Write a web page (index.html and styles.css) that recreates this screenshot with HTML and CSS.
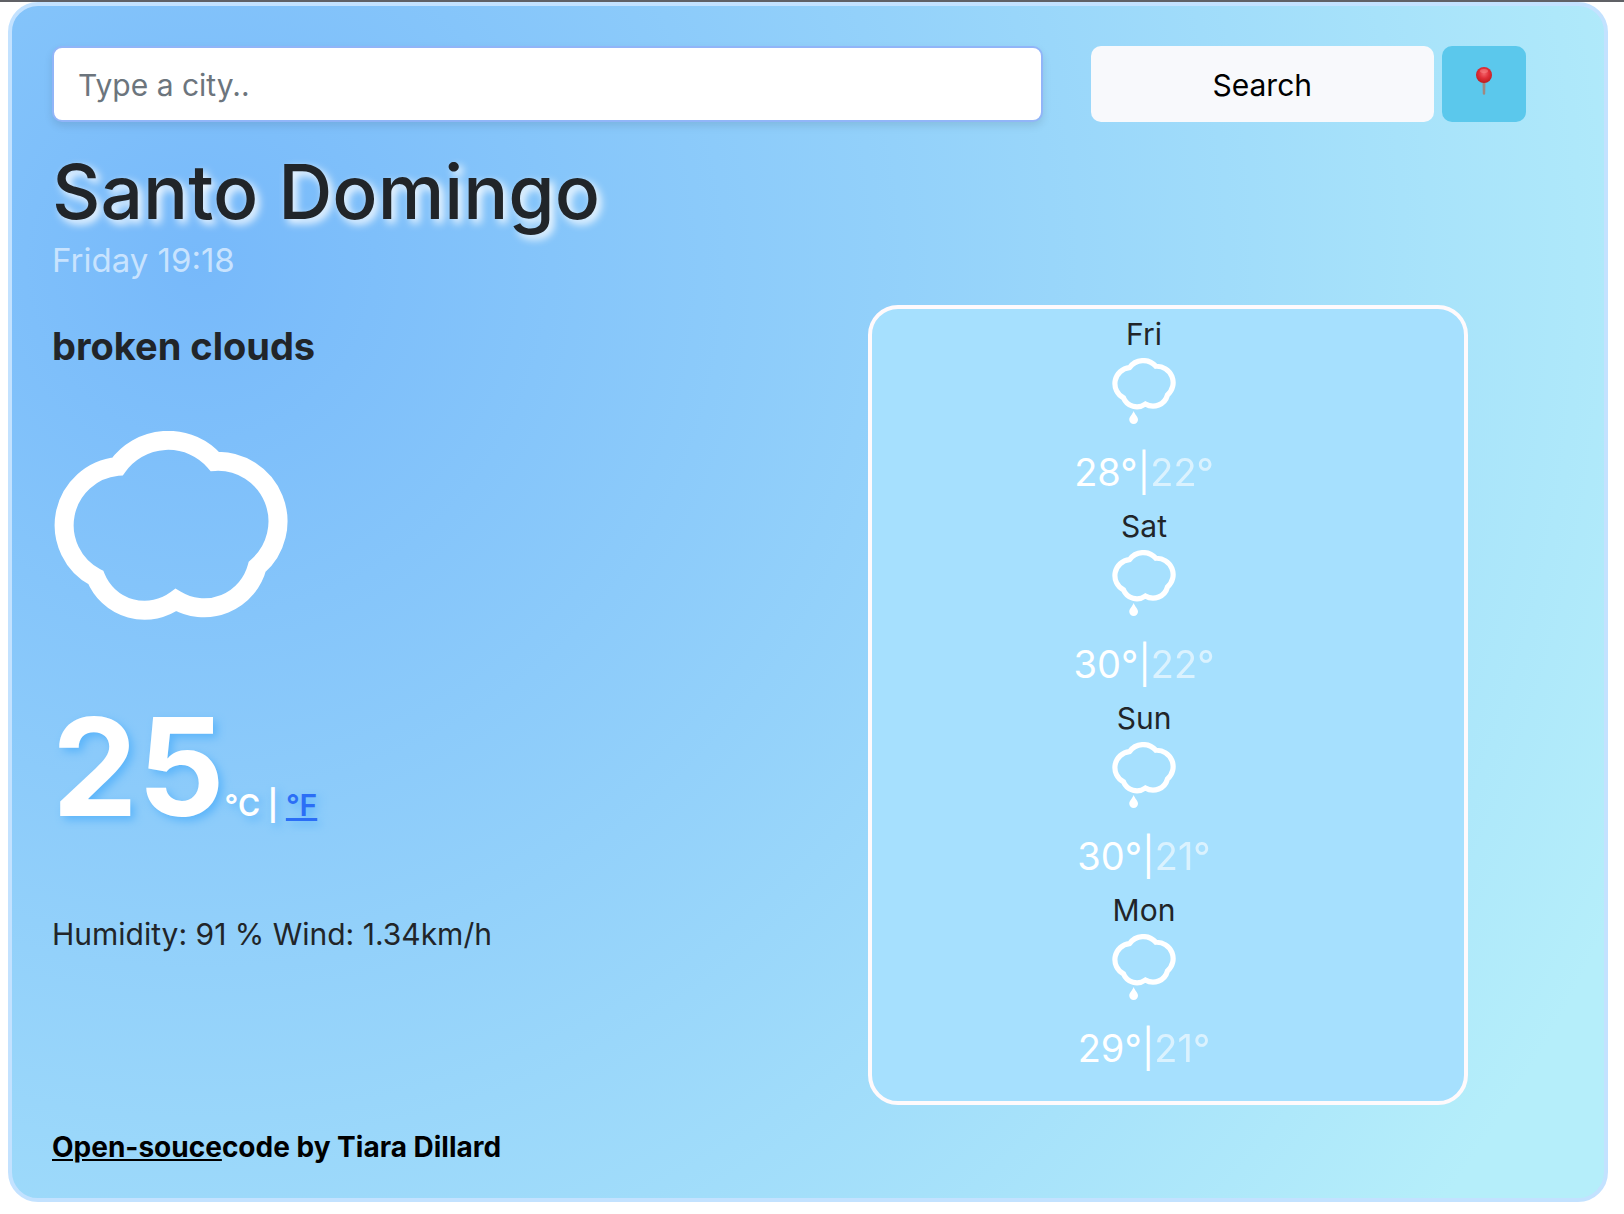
FILE: index.html
```html
<!DOCTYPE html>
<html lang="en">
<head>
  <meta charset="utf-8">
  <meta name="viewport" content="width=device-width, initial-scale=1">
  <title>Weather</title>
  <link rel="stylesheet" href="styles.css">
</head>
<body>
  <svg class="symbols" aria-hidden="true">
    <symbol id="cloud" viewBox="74 93 700 566" overflow="visible">
      <path class="cloud-line" d="M264 199A186 186 0 0 1 555 184A180 180 0 0 1 682 500A164 164 0 0 1 439 599A158 158 0 0 1 199 532A177 177 0 0 1 264 199Z"/>
    </symbol>
    <symbol id="rain" viewBox="74 93 700 726" overflow="visible">
      <path class="cloud-line" d="M264 199A186 186 0 0 1 555 184A180 180 0 0 1 682 500A164 164 0 0 1 439 599A158 158 0 0 1 199 532A177 177 0 0 1 264 199Z"/>
      <path class="drop" d="M310 676C322 712 358 738 358 772A48 46 0 0 1 262 772C262 738 298 712 310 676Z"/>
    </symbol>
  </svg>

  <main class="card">
    <form class="search">
      <input class="search-input" type="search" placeholder="Type a city.." aria-label="City" autocomplete="off">
      <button class="btn btn-search" type="submit">Search</button>
      <button class="btn btn-pin" type="button" aria-label="Use my location">
        <svg class="pin" viewBox="0 0 20 34" aria-hidden="true">
          <defs>
            <radialGradient id="ball" cx="50%" cy="40%" r="62%">
              <stop offset="0" stop-color="#f4646a"/>
              <stop offset="0.5" stop-color="#e02f38"/>
              <stop offset="1" stop-color="#b91c1c"/>
            </radialGradient>
          </defs>
          <path d="M8.5 14h3l-.3 13-1.2 1-1.2-1z" fill="#a08880"/>
          <circle cx="10" cy="8" r="8" fill="url(#ball)"/>
          <ellipse cx="10" cy="4" rx="4" ry="2" fill="#f98a8a" opacity=".5"/>
        </svg>
      </button>
    </form>

    <header>
      <h1 class="city">Santo Domingo</h1>
      <p class="date">Friday 19:18</p>
    </header>

    <div class="weather">
      <section class="current">
        <h2 class="description">broken clouds</h2>
        <svg class="current-icon" role="img" aria-label="broken clouds"><use href="#cloud"/></svg>
        <p class="temperature">25<span class="units">°C | <a href="#fahrenheit">°F</a></span></p>
        <p class="details">Humidity: 91 % Wind: 1.34km/h</p>
      </section>

      <section class="forecast" aria-label="Forecast">
        <article class="day">
          <h3 class="day-name">Fri</h3>
          <svg class="day-icon" role="img" aria-label="rain"><use href="#rain"/></svg>
          <p class="range">28°|<span class="low">22°</span></p>
        </article>
        <article class="day">
          <h3 class="day-name">Sat</h3>
          <svg class="day-icon" role="img" aria-label="rain"><use href="#rain"/></svg>
          <p class="range">30°|<span class="low">22°</span></p>
        </article>
        <article class="day">
          <h3 class="day-name">Sun</h3>
          <svg class="day-icon" role="img" aria-label="rain"><use href="#rain"/></svg>
          <p class="range">30°|<span class="low">21°</span></p>
        </article>
        <article class="day">
          <h3 class="day-name">Mon</h3>
          <svg class="day-icon" role="img" aria-label="rain"><use href="#rain"/></svg>
          <p class="range">29°|<span class="low">21°</span></p>
        </article>
      </section>
    </div>

    <footer class="credit"><a href="#source">Open-souce</a>code by Tiara Dillard</footer>
  </main>
</body>
</html>
```

FILE: styles.css
```css
* {
  box-sizing: border-box;
}

body {
  margin: 0;
  border-top: 2px solid #606166;
  background: #fff;
  color: #212529;
  font-family: Inter, "Liberation Sans", sans-serif;
  font-size: 30px;
}

h1, h2, h3, p {
  margin: 0;
}

.symbols {
  position: absolute;
  width: 0;
  height: 0;
}

.cloud-line {
  fill: none;
  stroke: #fff;
  stroke-width: 57;
}

.drop {
  fill: #fff;
}

.card {
  margin: 0 16px 12px 8px;
  padding: 40px 40px 30px;
  border: 4px solid #c3e2ff;
  border-radius: 30px;
  background: radial-gradient(circle at 12% 22%, #77b9fa 0%, #b5eefa 92%) border-box;
}

.search {
  display: grid;
  grid-template-columns: 3fr 1fr 84px;
  column-gap: 8px;
  padding-right: 38px;
}

.search-input {
  height: 76px;
  margin: 0 40px 0 0;
  padding: 2px 24px 0;
  border: 2px solid #91b5f8;
  border-radius: 10px;
  background: #fff;
  box-shadow: 0 4px 8px rgba(0, 0, 0, 0.1);
  color: inherit;
  font: inherit;
  appearance: none;
  outline: none;
}

.search-input::placeholder {
  color: #6c757d;
  opacity: 1;
}

.btn {
  display: flex;
  align-items: center;
  justify-content: center;
  height: 76px;
  padding: 0;
  border: 0;
  border-radius: 10px;
  color: #000;
  font: inherit;
  cursor: pointer;
}

.btn-search {
  padding-top: 2px;
  background: #f8f9fc;
}

.btn-pin {
  background: #5bc8ec;
}

.pin {
  width: 20px;
  height: 34px;
}

.city {
  margin-top: 24px;
  font-size: 75px;
  font-weight: 500;
  line-height: 92px;
  text-shadow: 4px 4px 8px #fff;
}

.date {
  color: #c8e3fe;
  font-size: 33px;
  line-height: 44px;
}

.weather {
  display: grid;
  grid-template-columns: 34fr 25fr;
  margin-top: 23px;
  padding-right: 96px;
}

.description {
  padding-top: 17px;
  font-size: 38px;
  font-weight: 700;
  line-height: 48px;
}

.current-icon {
  display: block;
  width: 234px;
  height: 189px;
  margin: 61px 0 67px 2px;
}

.temperature {
  color: #fff;
  font-size: 136px;
  font-weight: 700;
  line-height: 160px;
  text-shadow: 4px 4px 8px #5cb5fa;
}

.units {
  font-size: 30px;
  font-weight: 600;
  line-height: 1;
}

.units a {
  color: #2b6ef6;
}

.details {
  margin-top: 63px;
  line-height: 48px;
}

.forecast {
  padding: 1px 48px 23px 0;
  border: 4px solid #fffafc;
  border-radius: 30px;
  background: #a6e0fe;
}

.day {
  display: flex;
  flex-direction: column;
  align-items: center;
}

.day-name {
  font-size: 30px;
  font-weight: 400;
  line-height: 48px;
}

.day-icon {
  width: 64px;
  height: 66px;
  margin-bottom: 18px;
}

.range {
  color: #fff;
  font-size: 38px;
  line-height: 60px;
}

.low {
  opacity: 0.6;
}

.credit {
  margin-top: 21px;
  color: #000;
  font-size: 28px;
  font-weight: 700;
  line-height: 42px;
}

.credit a {
  color: inherit;
}
```
